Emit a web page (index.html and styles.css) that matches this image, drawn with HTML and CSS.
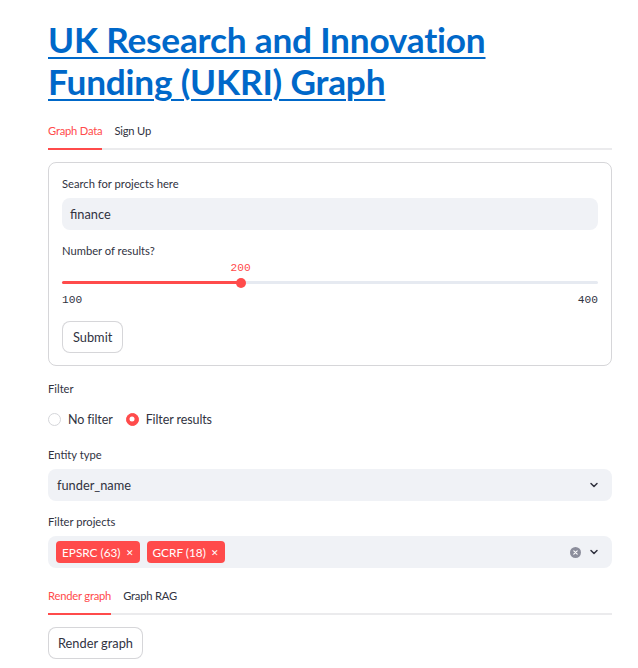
FILE: index.html
```html
<!DOCTYPE html>
<html lang="en">
<head>
<meta charset="utf-8">
<title>UKRI Graph</title>
<link rel="stylesheet" href="styles.css">
</head>
<body>
<main class="app">
  <h1 class="title"><a href="#">UK Research and Innovation<br>Funding (UKRI) Graph</a></h1>

  <div class="tabs tabs-top">
    <span class="tab active">Graph Data</span>
    <span class="tab">Sign Up</span>
  </div>

  <form class="form">
    <div class="label">Search for projects here</div>
    <div class="input">finance</div>

    <div class="label label-gap">Number of results?</div>
    <div class="slider">
      <div class="slider-head"><span class="slider-value" style="left:33.333%">200</span></div>
      <div class="slider-track">
        <div class="track">
          <div class="fill" style="width:33.333%"></div>
          <span class="thumb" style="left:33.333%"></span>
        </div>
      </div>
      <div class="ticks"><span>100</span><span>400</span></div>
    </div>
    <button type="button" class="btn btn-submit">Submit</button>
  </form>

  <div class="label section-label">Filter</div>
  <div class="radios">
    <label class="radio"><span class="dot"></span>No filter</label>
    <label class="radio checked"><span class="dot"></span>Filter results</label>
  </div>

  <div class="label section-label2">Entity type</div>
  <div class="select">
    <span class="select-text">funder_name</span>
    <svg class="chev" width="10" height="10" viewBox="0 0 10 10"><path d="M2 3.5 L5 6.5 L8 3.5" fill="none" stroke="#31333f" stroke-width="1.5" stroke-linecap="round" stroke-linejoin="round"/></svg>
  </div>

  <div class="label section-label3">Filter projects</div>
  <div class="select multi">
    <div class="chips">
      <span class="chip">EPSRC (63)<span class="chip-x">✕</span></span>
      <span class="chip">GCRF (18)<span class="chip-x">✕</span></span>
    </div>
    <div class="icons">
      <svg class="clear" width="11" height="11" viewBox="0 0 11 11"><circle cx="5.5" cy="5.5" r="5.5" fill="#8c8e9c"/><path d="M3.8 3.8 L7.2 7.2 M7.2 3.8 L3.8 7.2" stroke="#fff" stroke-width="1.1" stroke-linecap="round"/></svg>
      <svg class="chev" width="10" height="10" viewBox="0 0 10 10"><path d="M2 3.5 L5 6.5 L8 3.5" fill="none" stroke="#31333f" stroke-width="1.5" stroke-linecap="round" stroke-linejoin="round"/></svg>
    </div>
  </div>

  <div class="tabs tabs-bottom">
    <span class="tab active">Render graph</span>
    <span class="tab">Graph RAG</span>
  </div>

  <button type="button" class="btn btn-render">Render graph</button>
</main>
</body>
</html>
```

FILE: styles.css
```css
* { box-sizing: border-box; }
html, body { margin: 0; padding: 0; background: #fff; }
body {
  font-family: Lato, "Noto Sans", sans-serif;
  color: #31333f;
  font-size: 12.8px;
}
.app {
  padding: 18px 26px 0 48px;
  display: flex;
  flex-direction: column;
  align-items: stretch;
}
.title {
  margin: 0;
  font-size: 35.2px;
  line-height: 42px;
  font-weight: 700;
  letter-spacing: -0.2px;
}
.title a {
  color: #0068c9;
  text-decoration: underline;
  text-decoration-thickness: 2px;
  text-underline-offset: 4px;
}
.tabs {
  display: flex;
  gap: 12px;
  border-bottom: 2px solid #ebebed;
  font-size: 11.2px;
  line-height: 16px;
  letter-spacing: -0.2px;
}
.tabs-top { margin-top: 21px; }
.tabs-bottom { margin-top: 20px; }
.tab {
  padding-bottom: 9px;
  margin-bottom: -2px;
  border-bottom: 2px solid transparent;
  color: #31333f;
}
.tab.active {
  color: #ff4b4b;
  border-bottom-color: #ff4b4b;
}
.form {
  margin-top: 12px;
  border: 1px solid rgba(49, 51, 63, 0.2);
  border-radius: 8px;
  padding: 13px 13px 12px 13px;
  display: flex;
  flex-direction: column;
  align-items: flex-start;
}
.label {
  font-size: 11.2px;
  line-height: 16px;
  color: #31333f;
}
.form .label { margin-bottom: 6px; }
.form .label-gap { margin-top: 13px; margin-bottom: 0; }
.input {
  align-self: stretch;
  height: 32px;
  background: #f0f2f6;
  border-radius: 8px;
  padding: 0 8px;
  display: flex;
  align-items: center;
  font-size: 12.8px;
}
.slider { align-self: stretch; }
.slider-head {
  position: relative;
  height: 14px;
  margin-top: 2px;
}
.slider-value {
  position: absolute;
  top: 0;
  transform: translateX(-50%);
  font-family: "Liberation Mono", "DejaVu Sans Mono", monospace;
  font-size: 11.2px;
  line-height: 14px;
  color: #ff4b4b;
}
.slider-track {
  height: 15px;
  display: flex;
  align-items: center;
}
.track {
  position: relative;
  flex: 1;
  height: 3px;
  border-radius: 2px;
  background: #e6eaf1;
}
.fill {
  height: 100%;
  background: #ff4b4b;
  border-radius: 2px;
}
.thumb {
  position: absolute;
  top: 50%;
  width: 10px;
  height: 10px;
  border-radius: 50%;
  background: #ff4b4b;
  transform: translate(-50%, -50%);
}
.ticks {
  margin-top: 3px;
  display: flex;
  justify-content: space-between;
  font-family: "Liberation Mono", "DejaVu Sans Mono", monospace;
  font-size: 11.2px;
  line-height: 14px;
  color: #31333f;
}
.btn {
  font-family: inherit;
  font-size: 12.8px;
  color: #31333f;
  background: #fff;
  border: 1px solid rgba(49, 51, 63, 0.2);
  border-radius: 8px;
  height: 32px;
  padding: 0 10px;
  cursor: pointer;
}
.btn-submit { margin-top: 14px; }
.btn-render { margin-top: 12px; align-self: flex-start; padding: 0 9px; }
.section-label { margin-top: 15px; }
.radios {
  margin-top: 13px;
  display: flex;
  gap: 13px;
  height: 18px;
  align-items: center;
}
.radio {
  display: flex;
  align-items: center;
  gap: 7px;
  font-size: 12.5px;
  letter-spacing: -0.1px;
}
.dot {
  width: 13px;
  height: 13px;
  border-radius: 50%;
  border: 1px solid #d5d6da;
  background: #fff;
  position: relative;
}
.radio.checked .dot {
  background: #ff4b4b;
  border-color: #ff4b4b;
}
.radio.checked .dot::after {
  content: "";
  position: absolute;
  left: 50%;
  top: 50%;
  width: 5px;
  height: 5px;
  border-radius: 50%;
  background: #fff;
  transform: translate(-50%, -50%);
}
.section-label2 { margin-top: 19px; }
.section-label3 { margin-top: 13px; }
.select {
  margin-top: 6px;
  height: 32px;
  background: #f0f2f6;
  border-radius: 8px;
  display: flex;
  align-items: center;
  justify-content: space-between;
  padding: 0 13px 0 9px;
  font-size: 12.8px;
}
.multi { padding-left: 8px; }
.chips { display: flex; gap: 7px; }
.chip {
  background: #ff4b4b;
  color: #fff;
  border-radius: 4px;
  height: 22px;
  padding: 0 6px 0 6px;
  display: inline-flex;
  align-items: center;
  gap: 5px;
  font-size: 11.8px;
}
.chip-x { font-size: 9px; }
.icons { display: flex; align-items: center; gap: 8px; }
.chev { display: block; }
.clear { display: block; }
```
